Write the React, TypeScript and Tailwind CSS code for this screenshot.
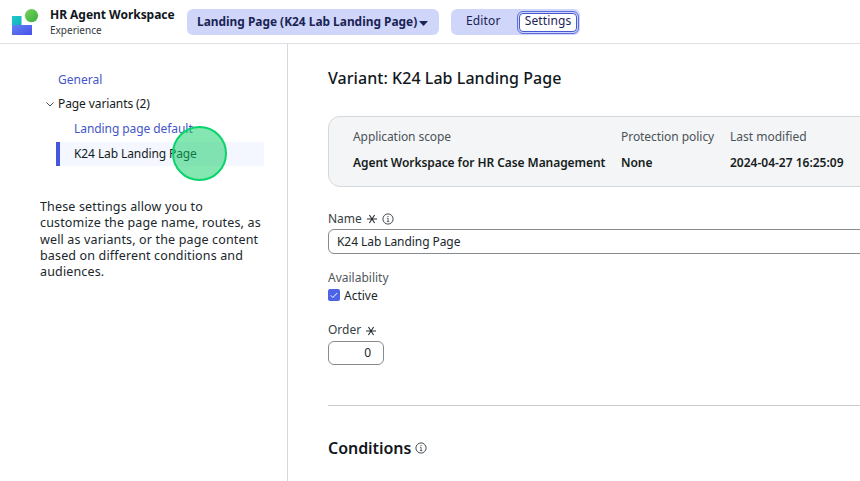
import React from 'react';

function InfoIcon({ className = '' }: { className?: string }) {
  return (
    <svg className={`shrink-0 ${className}`} width="12" height="12" viewBox="0 0 12 12" fill="none" stroke="#3a4248">
      <circle cx="6" cy="6" r="5.1" strokeWidth="0.95" />
      <path d="M4.9 5.3h1.2v3.2M4.8 8.6h2.5" strokeWidth="0.8" />
      <circle cx="6" cy="3.5" r="0.6" fill="#3a4248" stroke="none" />
    </svg>
  );
}

function Asterisk() {
  return (
    <svg className="shrink-0" width="10" height="10" viewBox="0 0 10 10" stroke="#252c31" strokeWidth="1.1">
      <path d="M0 5h10M2.4 1l5.2 8M7.6 1 2.4 9" />
    </svg>
  );
}

function Header() {
  return (
    <header className="flex h-11 shrink-0 items-start border-b border-[#dce0e5]">
      <svg className="ml-3 mt-2 shrink-0" width="27" height="28" viewBox="0 0 27 28">
        <defs>
          <linearGradient id="teal" x2="1" y2="1">
            <stop stopColor="#20c9cd" />
            <stop offset="1" stopColor="#12b0bd" />
          </linearGradient>
          <linearGradient id="blue" x2="1" y2="1">
            <stop stopColor="#5f83f2" />
            <stop offset="1" stopColor="#4a4fe8" />
          </linearGradient>
          <linearGradient id="green" x2="1" y2="1">
            <stop stopColor="#7bd35b" />
            <stop offset="1" stopColor="#35ad3d" />
          </linearGradient>
        </defs>
        <path d="M0 8h9.5v9H0z" fill="url(#teal)" />
        <path d="M0 17h20v10H0z" fill="url(#blue)" />
        <circle cx="19.5" cy="7.6" r="6.6" fill="url(#green)" />
      </svg>
      <div className="ml-[11px] mt-[7px] w-[137px] shrink-0">
        <div className="text-[12px] font-bold leading-4 tracking-[-0.03px] text-[#10171c]">HR Agent Workspace</div>
        <div className="text-[10px] leading-[15px] text-[#30383e]">Experience</div>
      </div>
      <button className="mt-[9px] flex h-[26px] w-[252px] shrink-0 items-center rounded-md bg-[#cfd6fa] pl-[10px] text-[11.9px] font-bold text-[#1a2454]">
        <span>Landing Page (K24 Lab Landing Page)</span>
        <svg className="ml-[2px] mt-[3px]" width="9" height="5" viewBox="0 0 9 5">
          <path d="M.7 0h7.6q.7 0 .3.6L5 4.6q-.5.5-1 0L.4.6Q0 0 .7 0z" fill="#1a2454" />
        </svg>
      </button>
      <div className="ml-3 mt-[9px] flex h-[26px] w-[129px] items-center rounded-md bg-[#cfd6fa] pl-[15px] text-[12px] text-[#1a2454]">
        <button className="w-[51px] pb-[2px] text-left tracking-[0.15px]">Editor</button>
        <button className="flex h-[23px] w-[62px] items-center justify-center rounded-md border border-[#5d6dde] bg-[#cfd6fa] p-px">
          <span className="flex h-full w-full items-center justify-center rounded-[4px] border border-[#4658d0] bg-white pb-[2px] tracking-[0.1px]">Settings</span>
        </button>
      </div>
    </header>
  );
}

function Sidebar() {
  return (
    <aside className="w-72 shrink-0 border-r border-[#d5d8dc] pt-6 text-[12px] text-[#151b20]">
      <nav className="relative">
        <div className="flex h-6 items-center pl-[58px] text-[#4456c7]">General</div>
        <div className="flex h-6 items-center pl-[46px]">
          <svg width="8" height="5" viewBox="0 0 8 5" fill="none" stroke="#444c52">
            <path d="M.4.4 4 4 7.6.4" />
          </svg>
          <span className="ml-1 tracking-[-0.1px]">Page variants (2)</span>
        </div>
        <div className="flex h-[26px] items-center pl-[74px] tracking-[-0.07px] text-[#4456c7]">Landing page default</div>
        <div className="ml-14 flex h-6 w-[208px] items-center border-l-4 border-[#4257d9] bg-[#f4f7ff] pb-px pl-[14px] tracking-[-0.1px]">
          K24 Lab Landing Page
        </div>
        <div className="absolute left-[172px] top-[58px] size-[55px] rounded-full border-2 border-[#09d46b] bg-[#09ce61]/50" />
      </nav>
      <p className="ml-10 mt-[33px] w-[240px] text-[12.5px] leading-[16.25px] tracking-[0.15px] text-[#20272c]">
        These settings allow you to<br />
        customize the page name, routes, as<br />
        well as variants, or the page content<br />
        based on different conditions and<br />
        audiences.
      </p>
    </aside>
  );
}

function Detail({ label, value, className }: { label: string; value: string; className: string }) {
  return (
    <div className={`shrink-0 ${className}`}>
      <div className="h-[26px] text-[12px] leading-4 text-[#4b5358]">{label}</div>
      <div className="text-[12px] font-semibold leading-4 text-[#161c20]">{value}</div>
    </div>
  );
}

function Main() {
  return (
    <main className="min-w-0 flex-1 overflow-hidden pl-10 text-[12px] leading-4 text-[#20272c]">
      <h1 className="mt-[22px] text-[16px] font-medium leading-6 tracking-[0.05px] text-[#12181c]">Variant: K24 Lab Landing Page</h1>
      <section className="mt-[26px] flex h-[71px] w-[560px] rounded-xl border border-[#d5d8da] bg-[#f4f5f7] pl-6 pt-3">
        <Detail label="Application scope" value="Agent Workspace for HR Case Management" className="w-[268px] tracking-[-0.07px]" />
        <Detail label="Protection policy" value="None" className="w-[109px] tracking-[-0.05px]" />
        <Detail label="Last modified" value="2024-04-27 16:25:09" className="w-[130px]" />
      </section>
      <div className="mt-6 flex h-[18px] items-start">
        <span className="mr-[5px] text-[#353e44]">Name</span>
        <span className="mt-[3px]"><Asterisk /></span>
        <InfoIcon className="ml-[5px] mt-[2px]" />
      </div>
      <div className="flex h-[25px] w-[560px] items-center rounded-md border border-[#858b8f] bg-white pl-2 tracking-[-0.07px]">K24 Lab Landing Page</div>
      <div className="mt-4 text-[#50585d]">Availability</div>
      <div className="mt-px flex h-4 items-center">
        <span className="flex size-3 items-center justify-center rounded-[2px] bg-[#4d64e6]">
          <svg width="8" height="7" viewBox="0 0 8 7" fill="none" stroke="white">
            <path d="m.8 3.4 2.1 2.1L7.2 1" />
          </svg>
        </span>
        <span className="ml-1 mt-px">Active</span>
      </div>
      <div className="mt-[19px] flex h-[19px] items-start">
        <span className="mr-[5px] text-[#353e44]">Order</span>
        <span className="mt-1"><Asterisk /></span>
      </div>
      <div className="flex h-6 w-14 items-center justify-end rounded-md border border-[#858b8f] pr-3">0</div>
      <hr className="mt-10 border-[#c8cbcd]" />
      <div className="mt-[30px] flex items-center">
        <h2 className="text-[16px] font-semibold leading-6 tracking-[-0.05px] text-[#12181c]">Conditions</h2>
        <InfoIcon className="ml-1" />
      </div>
    </main>
  );
}

export default function App() {
  return (
    <div className="flex h-[481px] w-[860px] flex-col overflow-hidden whitespace-nowrap bg-white font-['Noto_Sans',sans-serif]">
      <Header />
      <div className="flex min-h-0 flex-1">
        <Sidebar />
        <Main />
      </div>
    </div>
  );
}
